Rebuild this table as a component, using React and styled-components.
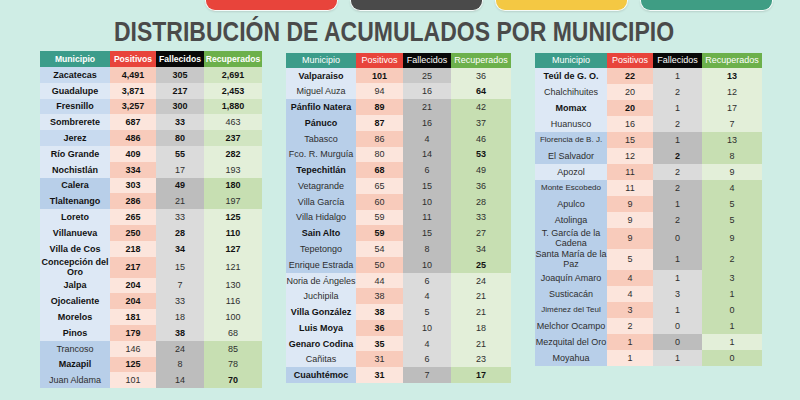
import React from 'react';
import styled, { createGlobalStyle } from 'styled-components';

// ─── Data ─────────────────────────────────────────────────────────────────────
// [municipio, positivos, fallecidos, recuperados, bold mask (M P F R), tones (M F R), small]
const TABLE_A = [
  ['Zacatecas', '4,491', '305', '2,691', '1111', 'mmm'],
  ['Guadalupe', '3,871', '217', '2,453', '1111', 'lll'],
  ['Fresnillo', '3,257', '300', '1,880', '1111', 'mmm'],
  ['Sombrerete', '687', '33', '463', '1110', 'lll'],
  ['Jerez', '486', '80', '237', '1111', 'mmm'],
  ['Río Grande', '409', '55', '282', '1111', 'lll'],
  ['Nochistlán', '334', '17', '193', '1100', 'lll'],
  ['Calera', '303', '49', '180', '1111', 'ddd'],
  ['Tlaltenango', '286', '21', '197', '1100', 'ddd'],
  ['Loreto', '265', '33', '125', '1101', 'lll'],
  ['Villanueva', '250', '28', '110', '1111', 'lll'],
  ['Villa de Cos', '218', '34', '127', '1111', 'lll'],
  ['Concepción del\nOro', '217', '15', '121', '1100', 'lll'],
  ['Jalpa', '204', '7', '130', '1100', 'lll'],
  ['Ojocaliente', '204', '33', '116', '1100', 'lll'],
  ['Morelos', '181', '18', '100', '1100', 'lll'],
  ['Pinos', '179', '38', '68', '1110', 'lll'],
  ['Trancoso', '146', '24', '85', '0000', 'ddd'],
  ['Mazapil', '125', '8', '78', '1100', 'ddd'],
  ['Juan Aldama', '101', '14', '70', '0001', 'ddd'],
];

const TABLE_B = [
  ['Valparaiso', '101', '25', '36', '1100', 'lml'],
  ['Miguel Auza', '94', '16', '64', '0001', 'lll'],
  ['Pánfilo Natera', '89', '21', '42', '1100', 'ddd'],
  ['Pánuco', '87', '16', '37', '1100', 'ddd'],
  ['Tabasco', '86', '4', '46', '0000', 'ddd'],
  ['Fco. R. Murguía', '80', '14', '53', '0001', 'ddd'],
  ['Tepechitlán', '68', '6', '49', '1100', 'ddd'],
  ['Vetagrande', '65', '15', '36', '0000', 'ddd'],
  ['Villa García', '60', '10', '28', '0000', 'ddd'],
  ['Villa Hidalgo', '59', '11', '33', '0000', 'ddd'],
  ['Sain Alto', '59', '15', '27', '1100', 'ddd'],
  ['Tepetongo', '54', '8', '34', '0000', 'ddd'],
  ['Enrique Estrada', '50', '10', '25', '0001', 'ddd'],
  ['Noria de Ángeles', '44', '6', '24', '0000', 'lll'],
  ['Juchipila', '38', '4', '21', '0000', 'lll'],
  ['Villa González', '38', '5', '21', '1100', 'lll'],
  ['Luis Moya', '36', '10', '18', '1100', 'lll'],
  ['Genaro Codina', '35', '4', '21', '1100', 'lll'],
  ['Cañitas', '31', '6', '23', '0000', 'lll'],
  ['Cuauhtémoc', '31', '7', '17', '1101', 'ddd'],
];

const TABLE_C = [
  ['Teúl de G. O.', '22', '1', '13', '1101', 'lll'],
  ['Chalchihuites', '20', '2', '12', '0000', 'lll'],
  ['Momax', '20', '1', '17', '1100', 'lll'],
  ['Huanusco', '16', '2', '7', '0000', 'lll'],
  ['Florencia de B. J.', '15', '1', '13', '0000', 'ddd', true],
  ['El Salvador', '12', '2', '8', '0010', 'ddd'],
  ['Apozol', '11', '2', '9', '0000', 'lll'],
  ['Monte Escobedo', '11', '2', '4', '0000', 'ddd', true],
  ['Apulco', '9', '1', '5', '0000', 'ddd'],
  ['Atolinga', '9', '2', '5', '0000', 'ddd'],
  ['T. García de la\nCadena', '9', '0', '9', '0000', 'ddd'],
  ['Santa María de la\nPaz', '5', '1', '2', '0000', 'ddd'],
  ['Joaquín Amaro', '4', '1', '3', '0000', 'dld'],
  ['Susticacán', '4', '3', '1', '0000', 'dld'],
  ['Jiménez del Teul', '3', '1', '0', '0000', 'dld', true],
  ['Melchor Ocampo', '2', '0', '1', '0000', 'dld'],
  ['Mezquital del Oro', '1', '0', '1', '0000', 'ddl'],
  ['Moyahua', '1', '1', '0', '0000', 'dld'],
];

const TONES = {
  mun: { l: '#dde8f5', m: '#c8daef', d: '#b8cfe9' },
  fal: { l: '#dbdbdb', m: '#c8c8c8', d: '#bdbdbd' },
  rec: { l: '#e3efd9', m: '#d1e5c1', d: '#c7dfb2' },
};
const POS = ['#f8cbbb', '#fce5dc'];

const PILLS = ['#e8443b', '#4a4a4a', '#f4c843', '#3f9d84'];

// ─── Component ────────────────────────────────────────────────────────────────
function CasesTable({ cols, headH, rowH, boldHead, rows, lift }) {
  return (
    <Table $cols={cols} $headH={headH} $rowH={rowH} $lift={lift}>
      <Head $bg="#3c9c8a" $bold={boldHead}>Municipio</Head>
      <Head $bg="#e8443b" $bold={boldHead}>Positivos</Head>
      <Head $bg="#080808" $bold={boldHead}>Fallecidos</Head>
      <Head $bg="#6cb04b" $bold={boldHead}>Recuperados</Head>
      {rows.map(([name, pos, fal, rec, b, t, small], i) => (
        <React.Fragment key={name}>
          <Cell $bg={TONES.mun[t[0]]} $bold={b[0] === '1'} $small={small}>{name}</Cell>
          <Cell $bg={POS[i % 2]} $bold={b[1] === '1'}>{pos}</Cell>
          <Cell $bg={TONES.fal[t[1]]} $bold={b[2] === '1'}>{fal}</Cell>
          <Cell $bg={TONES.rec[t[2]]} $bold={b[3] === '1'}>{rec}</Cell>
        </React.Fragment>
      ))}
    </Table>
  );
}

export default function App() {
  return (
    <>
      <GlobalStyle />
      <Page>
        <PillRow>
          {PILLS.map((c) => <Pill key={c} $bg={c} />)}
        </PillRow>
        <Title>DISTRIBUCIÓN DE ACUMULADOS POR MUNICIPIO</Title>
        <Tables>
          <CasesTable cols="70px 46px 48px 58px" headH={16} rowH={15.8} boldHead rows={TABLE_A} />
          <CasesTable cols="70px 47px 48px 60px" headH={15} rowH={15.77} rows={TABLE_B} lift={1.7} />
          <CasesTable cols="72px 46px 49px 60px" headH={15} rowH={16} rows={TABLE_C} lift={1.7} />
        </Tables>
      </Page>
    </>
  );
}

// ─── Styled components ────────────────────────────────────────────────────────
const GlobalStyle = createGlobalStyle`
  html, body {
    margin: 0;
    padding: 0;
    background: #cfede5;
  }
  body {
    font-family: 'Liberation Sans', Arial, sans-serif;
  }
`;

const Page = styled.div`
  width: 800px;
  height: 400px;
  overflow: hidden;
  background: #cfede5;
`;

const PillRow = styled.div`
  display: flex;
  gap: 12px;
  padding-left: 205px;
`;

const Pill = styled.div`
  width: 133px;
  height: 11px;
  box-sizing: border-box;
  background: ${({ $bg }) => $bg};
  border: 1.5px solid #f4fbf9;
  border-top: none;
  border-radius: 0 0 10px 10px;
  box-shadow: 0 1px 2px rgba(0, 0, 0, 0.12);
`;

const Title = styled.h1`
  margin: 8px 12px 0 0;
  font-family: 'Liberation Sans Narrow', 'Liberation Sans', sans-serif;
  font-size: 27px;
  line-height: 27px;
  font-weight: 700;
  color: #4a4a4a;
  text-align: center;
  white-space: nowrap;
  transform: scaleX(0.852);
  transform-origin: center;
`;

const Tables = styled.div`
  display: grid;
  grid-template-columns: 222px 225px 227px;
  column-gap: 24px;
  align-items: start;
  padding: 5px 0 0 40px;
`;

const Table = styled.div`
  display: grid;
  grid-template-columns: ${({ $cols }) => $cols};
  grid-template-rows: ${({ $headH }) => $headH}px;
  grid-auto-rows: minmax(${({ $rowH }) => $rowH}px, auto);
  margin-top: ${({ $lift }) => $lift || 0}px;
`;

const Head = styled.div`
  display: flex;
  align-items: center;
  justify-content: center;
  background: ${({ $bg }) => $bg};
  color: #ffffff;
  font-size: ${({ $bold }) => ($bold ? '8.6px' : '9px')};
  font-weight: ${({ $bold }) => ($bold ? 700 : 400)};
  white-space: nowrap;
  overflow: hidden;
`;

const Cell = styled.div`
  display: flex;
  align-items: center;
  justify-content: center;
  padding: 0.5px 0;
  background: ${({ $bg }) => $bg};
  color: ${({ $bold }) => ($bold ? '#121212' : '#2e2e2e')};
  font-size: ${({ $small }) => ($small ? '8px' : '9px')};
  font-weight: ${({ $bold }) => ($bold ? 700 : 400)};
  line-height: 10px;
  text-align: center;
  white-space: pre;
`;
